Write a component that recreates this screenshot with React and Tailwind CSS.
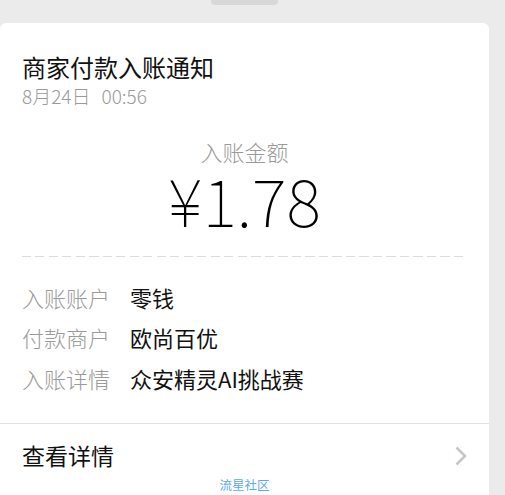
const rows = [
  { label: '入账账户', value: '零钱' },
  { label: '付款商户', value: '欧尚百优' },
  { label: '入账详情', value: '众安精灵AI挑战赛' },
]

export default function App() {
  return (
    <div
      className="w-[505px] h-[495px] overflow-hidden bg-[#ebebeb] text-black"
      style={{ fontFamily: '"Noto Sans CJK SC", "Noto Sans", sans-serif' }}
    >
      {/* tab handle at the top */}
      <div className="flex w-[489px] justify-center">
        <div className="h-[5px] w-[67px] rounded-b-[4px] bg-[#d8d8d8]" />
      </div>

      <div className="mt-[18px] w-[489px] h-[480px] rounded-[6px] bg-white">
        <div className="px-[22px] pt-[29px]">
          <p className="text-[24px] leading-[30px] text-[#111]">商家付款入账通知</p>
          <p className="mt-[2px] text-[19px] leading-[24px] font-light text-[#9a9a9a]">
            8月24日<span className="ml-[11px]">00:56</span>
          </p>
        </div>

        <div className="mt-[29px] flex flex-col items-center">
          <p className="text-[22px] leading-[28px] font-light text-[#9a9a9a]">入账金额</p>
          <p className="text-[66px] leading-[66px] font-thin text-black">¥1.78</p>
        </div>

        <div className="mx-[22px] mt-[25px] h-px bg-[repeating-linear-gradient(90deg,#dcdcdc_0_9px,transparent_9px_13.5px)]" />

        <div className="px-[22px] pt-[20px]">
          {rows.map((r) => (
            <div key={r.label} className="flex h-[40.5px] items-center text-[22px]">
              <span className="w-[108px] font-light text-[#9a9a9a]">{r.label}</span>
              <span className="text-[#111]">{r.value}</span>
            </div>
          ))}
        </div>

        <div className="mt-[24px] h-px bg-[#e2e2e2]" />

        <div className="flex h-[64px] items-center justify-between pl-[22px] pr-[22px]">
          <span className="text-[23px] text-[#111]">查看详情</span>
          <svg width="14" height="20" viewBox="0 0 14 20" className="mr-[-1px]">
            <path d="M2.5 1.5 L11 10 L2.5 18.5" fill="none" stroke="#c6c6c6" strokeWidth="2.6" />
          </svg>
        </div>
        <p className="-mt-[11px] text-center text-[12.5px] leading-[16px] text-[#5aaaf0]">流星社区</p>
      </div>
    </div>
  )
}
